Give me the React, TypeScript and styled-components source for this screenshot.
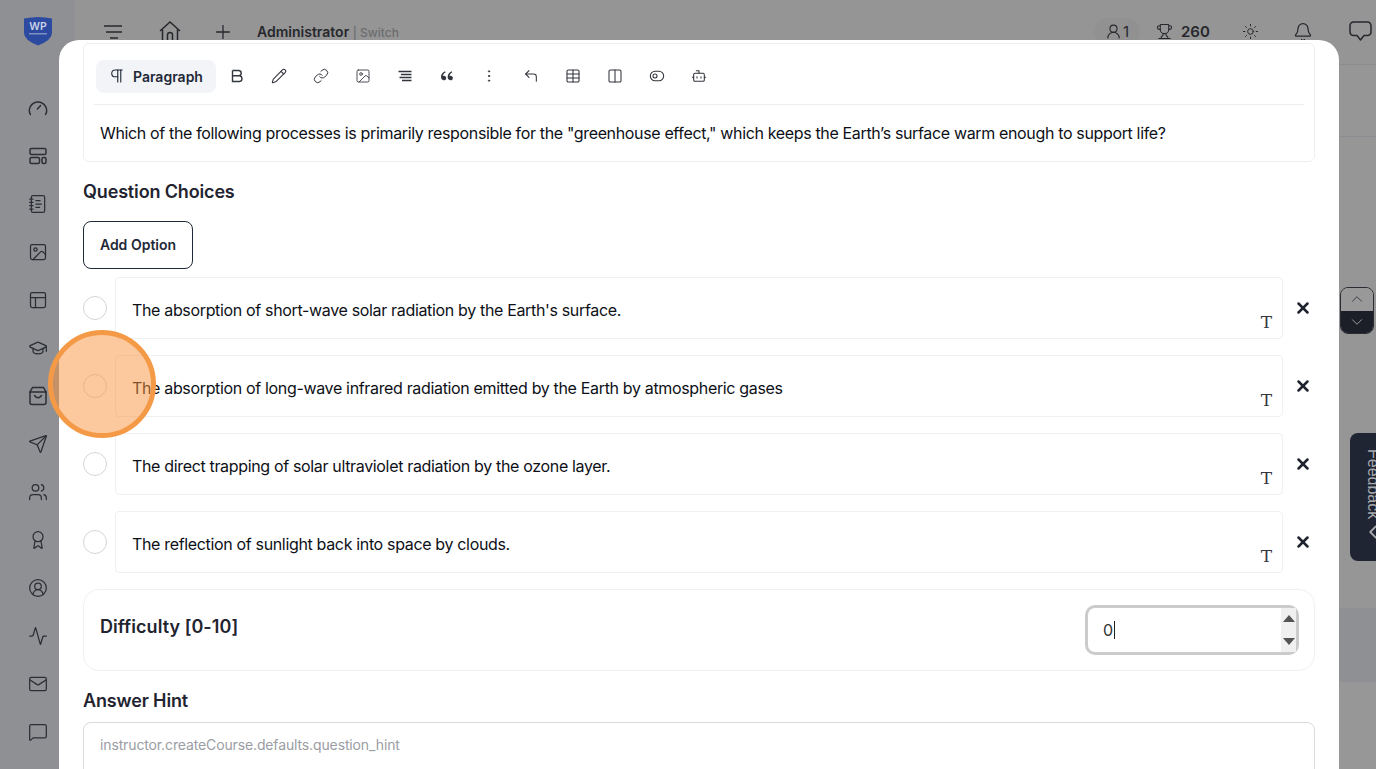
import React from "react";
import styled, { createGlobalStyle } from "styled-components";
import {
  Activity,
  Award,
  Bell,
  Bot,
  ChevronDown,
  ChevronLeft,
  ChevronUp,
  CircleUserRound,
  Columns2,
  CornerUpLeft,
  EllipsisVertical,
  GraduationCap,
  Image,
  Link,
  Mail,
  MessageSquare,
  NotebookText,
  PanelsTopLeft,
  Pencil,
  Pilcrow,
  Plus,
  Send,
  Sun,
  Table,
  ToggleLeft,
  Trophy,
  UserRound,
  Users,
  X,
} from "lucide-react";
import { RiDoubleQuotesL } from "react-icons/ri";

const GlobalStyle = createGlobalStyle`
  html, body {
    margin: 0;
    height: 100%;
    overflow: hidden;
    font-family: Inter, "Liberation Sans", sans-serif;
    color: #0d1017;
  }
  * { box-sizing: border-box; }
`;

const Page = styled.div`
  position: relative;
  display: flex;
  width: 1376px;
  height: 769px;
  overflow: hidden;
  background: #959595;
`;

const Sidebar = styled.aside`
  display: flex;
  flex-direction: column;
  align-items: center;
  flex: 0 0 75px;
  background: #8f9094;
  color: #2b2e35;
`;

const LogoBox = styled.div`
  display: flex;
  justify-content: center;
  height: 84px;
  padding-top: 16px;
`;

const NavItem = styled.div`
  display: flex;
  align-items: center;
  justify-content: center;
  height: 48px;
  width: 100%;
`;

const Main = styled.div`
  display: flex;
  flex-direction: column;
  flex: 1;
`;

const Header = styled.header`
  display: flex;
  align-items: center;
  height: 65px;
  padding-bottom: 1px;
  border-bottom: 1px solid #8b8b8b;
  color: #26282d;
`;

const HeaderIcon = styled.div<{ $width: number }>`
  display: flex;
  justify-content: center;
  width: ${(p) => p.$width}px;
`;

const Role = styled.div`
  font-size: 14px;
  font-weight: 600;
  white-space: nowrap;
`;

const Switcher = styled.span`
  font-size: 12px;
  font-weight: 500;
  color: #6b6c6f;
`;

const HeaderRight = styled.div`
  display: flex;
  align-items: center;
  margin-left: auto;
`;

const OnlinePill = styled.div`
  display: flex;
  align-items: center;
  gap: 1px;
  height: 28px;
  padding: 0 11px;
  border-radius: 14px;
  background: #919191;
  font-size: 15px;
`;

const Points = styled.div`
  display: flex;
  align-items: center;
  gap: 8px;
  width: 82px;
  margin-left: 16px;
  font-size: 15px;
  font-weight: 600;
`;

const Band = styled.div<{ $height: number; $bg: string }>`
  flex: 0 0 ${(p) => p.$height}px;
  background: ${(p) => p.$bg};
`;

const Overlay = styled.div`
  position: absolute;
  inset: 0;
  padding: 40px 37px 0 59px;
`;

const Modal = styled.div`
  height: 729px;
  overflow: hidden;
  padding: 3px 24px 0;
  border-radius: 20px 20px 0 0;
  background: #fff;
`;

const EditorCard = styled.section`
  border: 1px solid #eceef1;
  border-radius: 6px;
`;

const Toolbar = styled.div`
  display: flex;
  align-items: center;
  margin: 0 10px;
  padding: 16px 0 11px 2px;
  border-bottom: 1px solid #eceef1;
  color: #33363d;
`;

const ParagraphButton = styled.button`
  display: flex;
  align-items: center;
  gap: 7px;
  width: 120px;
  height: 33px;
  padding: 0 12px 1px;
  border: 0;
  border-radius: 8px;
  background: #f2f4f8;
  color: #1f2937;
  font: 600 14px Inter, sans-serif;
`;

const ToolButton = styled.div`
  display: flex;
  align-items: center;
  justify-content: center;
  width: 42px;
  height: 33px;
  padding-bottom: 1px;
`;

const EditorText = styled.p`
  margin: 0;
  padding: 16px;
  font-size: 16px;
  line-height: 24px;
  letter-spacing: -0.35px;
  white-space: nowrap;
`;

const SectionTitle = styled.h3`
  margin: 16px 0 0;
  font-size: 18px;
  font-weight: 600;
  line-height: 28px;
  letter-spacing: -0.15px;
  color: #1f2430;
`;

const AddButton = styled.button`
  display: block;
  width: 110px;
  height: 48px;
  margin: 15px 0 8px;
  padding-bottom: 2px;
  border: 1px solid #1f2937;
  border-radius: 8px;
  background: #fff;
  color: #1f2937;
  font: 600 14px Inter, sans-serif;
`;

const Choices = styled.div`
  display: flex;
  flex-direction: column;
  gap: 16px;
`;

const Choice = styled.div`
  display: flex;
  align-items: center;
  padding-right: 3px;
`;

const Radio = styled.span`
  flex: 0 0 24px;
  height: 24px;
  margin-right: 8px;
  border: 1px solid #d5d6d8;
  border-radius: 50%;
  background: #fff;
`;

const ChoiceBox = styled.div`
  position: relative;
  flex: 1;
  height: 62px;
  margin-right: 11px;
  padding: 20px 16px 0;
  border: 1px solid #eef0f2;
  border-radius: 4px;
  font-size: 16px;
  line-height: 24px;
  letter-spacing: -0.34px;
`;

const TypeMark = styled.span`
  position: absolute;
  right: 10px;
  top: 33px;
  font: 400 17px/22px "DejaVu Serif", serif;
  letter-spacing: 0;
  color: #33363d;
`;

const RemoveIcon = styled(X)`
  flex: 0 0 18px;
  color: #1f2430;
`;

const DifficultyCard = styled.section`
  display: flex;
  align-items: center;
  justify-content: space-between;
  height: 82px;
  margin-top: 16px;
  padding: 0 15px 8px 16px;
  border: 1px solid #eef0f2;
  border-radius: 16px;
`;

const DifficultyLabel = styled.div`
  font-size: 18px;
  font-weight: 600;
  letter-spacing: 0.05px;
  color: #1f2430;
`;

const NumberField = styled.div`
  display: flex;
  align-items: center;
  justify-content: space-between;
  width: 214px;
  height: 50px;
  margin-top: 8px;
  padding-left: 15px;
  border: 3px solid #cbcbcb;
  border-radius: 10px;
  font-size: 16px;
  color: #333;
`;

const Caret = styled.span`
  display: inline-block;
  width: 1px;
  height: 18px;
  margin-left: 1px;
  vertical-align: -3px;
  background: #222;
`;

const Spinner = styled.div`
  display: flex;
  flex-direction: column;
  justify-content: space-between;
  align-items: center;
  width: 15px;
  height: 100%;
  padding: 7px 0;
  background: #f0f0f0;
`;

const SpinArrow = styled.span<{ $up?: boolean }>`
  width: 0;
  height: 0;
  border-left: 6.5px solid transparent;
  border-right: 6.5px solid transparent;
  ${(p) => (p.$up ? "border-bottom: 7px solid #555;" : "border-top: 7px solid #555;")}
`;

const HintInput = styled.div`
  height: 80px;
  margin-top: 7px;
  padding: 12px 16px;
  border: 1px solid #d9dadd;
  border-radius: 8px;
  font-size: 14px;
  line-height: 20px;
  letter-spacing: -0.13px;
  color: #9a9da3;
`;

const ClickMarker = styled.div`
  position: absolute;
  left: 48px;
  top: 330px;
  width: 108px;
  height: 108px;
  border: 5px solid #f49a47;
  border-radius: 50%;
  background: rgba(250, 146, 60, 0.5);
`;

const ScrollButtons = styled.div`
  position: absolute;
  left: 1340px;
  top: 287px;
  display: flex;
  flex-direction: column;
  width: 34px;
  height: 47px;
  overflow: hidden;
  border: 1px solid #2a2d33;
  border-radius: 8px;
`;

const ScrollHalf = styled.div<{ $dark?: boolean }>`
  display: flex;
  flex: 1;
  align-items: center;
  justify-content: center;
  background: ${(p) => (p.$dark ? "#1c1f27" : "#999999")};
  color: ${(p) => (p.$dark ? "#a9abb0" : "#33363d")};
`;

const FeedbackTab = styled.div`
  position: absolute;
  left: 1350px;
  top: 433px;
  display: flex;
  flex-direction: column;
  align-items: center;
  width: 46px;
  height: 128px;
  padding-top: 16px;
  border-radius: 8px 0 0 8px;
  background: #1f2532;
  color: #a7a9ad;
  font: 400 16px "Liberation Sans", sans-serif;
`;

const FeedbackLabel = styled.span`
  writing-mode: vertical-rl;
  line-height: 18px;
`;

const FeedbackChevron = styled(ChevronLeft)`
  margin-top: 2px;
`;

const ShieldLogo = () => (
  <svg width="30" height="30" viewBox="0 0 30 30">
    <path d="M1 2.5 Q15 -0.5 29 2.5 V17 Q29 24 15 29.5 Q1 24 1 17 Z" fill="#2b4aa0" />
    <text x="15" y="14" textAnchor="middle" fontSize="10.5" fontWeight="600" fill="#c9d1e6" fontFamily="Inter, sans-serif">
      WP
    </text>
    <rect x="6" y="17" width="18" height="1.5" fill="#7f90c4" />
  </svg>
);

const GaugeIcon = () => (
  <svg width="20" height="20" viewBox="0 0 20 20" fill="none" stroke="currentColor" strokeWidth="1.5" strokeLinecap="round">
    <path d="M2.4 16.5 A8.6 8.6 0 1 1 17.6 16.5" />
    <path d="M9.4 11 L12.6 7.6" />
  </svg>
);

const BlocksIcon = () => (
  <svg width="20" height="20" viewBox="0 0 20 20" fill="none" stroke="currentColor" strokeWidth="1.5">
    <rect x="2" y="2.5" width="16" height="6" rx="1.5" />
    <rect x="2" y="11.5" width="9.5" height="6" rx="1.5" />
    <rect x="14" y="11.5" width="4" height="6" rx="1.5" />
  </svg>
);

const BagIcon = () => (
  <svg width="20" height="20" viewBox="0 0 20 20" fill="none" stroke="currentColor" strokeWidth="1.5" strokeLinecap="round">
    <path d="M4.5 1.5 H15.5 L18 6 V16.5 A2 2 0 0 1 16 18.5 H4 A2 2 0 0 1 2 16.5 V6 Z" />
    <path d="M2 6 H18" />
    <path d="M6.5 9.5 Q10 14 13.5 9.5" />
  </svg>
);

const MenuIcon = () => (
  <svg width="20" height="16" viewBox="0 0 20 16" fill="none" stroke="currentColor" strokeWidth="1.6">
    <path d="M1 2 H19 M3 8 H19 M7 14 H15" />
  </svg>
);

const HouseIcon = () => (
  <svg width="22" height="24" viewBox="0 0 22 24" fill="none" stroke="currentColor" strokeWidth="1.5">
    <path d="M1 11 L11 2 L21 11 M3.5 9.5 V22 H18.5 V9.5" />
    <path d="M8.5 22 V15 A2.5 2.5 0 0 1 13.5 15 V22" />
  </svg>
);

const ChatIcon = () => (
  <svg width="23" height="21" viewBox="0 0 23 21" fill="none" stroke="currentColor" strokeWidth="1.5" strokeLinejoin="round">
    <path d="M4.5 1 H18.5 A3.5 3.5 0 0 1 22 4.5 V11 A3.5 3.5 0 0 1 18.5 14.5 H15 L11.5 19 L8 14.5 H4.5 A3.5 3.5 0 0 1 1 11 V4.5 A3.5 3.5 0 0 1 4.5 1 Z" />
  </svg>
);

const BoldIcon = () => (
  <svg width="16" height="16" viewBox="0 0 16 16" fill="none" stroke="currentColor" strokeWidth="1.4">
    <path d="M3.5 2.5 H10 A2.7 2.7 0 0 1 10 7.8 H3.5 M3.5 7.8 H10.6 A2.9 2.9 0 0 1 10.6 13.5 H3.5 Z M3.5 2.5 V13.5" />
  </svg>
);

const AlignIcon = () => (
  <svg width="16" height="16" viewBox="0 0 16 16" fill="none" stroke="currentColor" strokeWidth="1.3">
    <path d="M1.5 3.5 H14.5 M4 6.5 H14.5 M2.5 9.5 H14.5 M5 12.5 H14.5" />
  </svg>
);

const navIcons = [
  <GaugeIcon />,
  <BlocksIcon />,
  <NotebookText size={20} strokeWidth={1.5} />,
  <Image size={20} strokeWidth={1.5} />,
  <PanelsTopLeft size={20} strokeWidth={1.5} />,
  <GraduationCap size={20} strokeWidth={1.5} />,
  <BagIcon />,
  <Send size={20} strokeWidth={1.5} />,
  <Users size={20} strokeWidth={1.5} />,
  <Award size={20} strokeWidth={1.5} />,
  <CircleUserRound size={20} strokeWidth={1.5} />,
  <Activity size={20} strokeWidth={1.5} />,
  <Mail size={20} strokeWidth={1.5} />,
  <MessageSquare size={20} strokeWidth={1.5} />,
];

const toolIcons = [
  <BoldIcon />,
  <Pencil size={16} strokeWidth={1.6} />,
  <Link size={16} strokeWidth={1.5} />,
  <Image size={16} strokeWidth={1.3} />,
  <AlignIcon />,
  <RiDoubleQuotesL size={16} />,
  <EllipsisVertical size={16} strokeWidth={1.5} />,
  <CornerUpLeft size={16} strokeWidth={1.6} />,
  <Table size={16} strokeWidth={1.6} />,
  <Columns2 size={16} strokeWidth={1.6} />,
  <ToggleLeft size={16} strokeWidth={1.6} />,
  <Bot size={16} strokeWidth={1.6} />,
];

const choices = [
  "The absorption of short-wave solar radiation by the Earth's surface.",
  "The absorption of long-wave infrared radiation emitted by the Earth by atmospheric gases",
  "The direct trapping of solar ultraviolet radiation by the ozone layer.",
  "The reflection of sunlight back into space by clouds.",
];

export default function App() {
  return (
    <Page>
      <GlobalStyle />
      <Sidebar>
        <LogoBox>
          <ShieldLogo />
        </LogoBox>
        {navIcons.map((icon, i) => (
          <NavItem key={i}>{icon}</NavItem>
        ))}
      </Sidebar>
      <Main>
        <Header>
          <HeaderIcon $width={76}>
            <MenuIcon />
          </HeaderIcon>
          <HeaderIcon $width={38}>
            <HouseIcon />
          </HeaderIcon>
          <HeaderIcon $width={68}>
            <Plus size={22} strokeWidth={1.4} />
          </HeaderIcon>
          <Role>
            Administrator <Switcher>| Switch</Switcher>
          </Role>
          <HeaderRight>
            <OnlinePill>
              <UserRound size={17} strokeWidth={1.5} />1
            </OnlinePill>
            <Points>
              <Trophy size={17} strokeWidth={1.5} />
              260
            </Points>
            <HeaderIcon $width={24}>
              <Sun size={17} strokeWidth={1.4} />
            </HeaderIcon>
            <HeaderIcon $width={82}>
              <Bell size={20} strokeWidth={1.5} />
            </HeaderIcon>
            <HeaderIcon $width={32}>
              <ChatIcon />
            </HeaderIcon>
          </HeaderRight>
        </Header>
        <Band $height={71} $bg="#969696" />
        <Band $height={1} $bg="#8c8c92" />
        <Band $height={471} $bg="#969696" />
        <Band $height={74} $bg="#8f9093" />
        <Band $height={87} $bg="#979797" />
      </Main>

      <Overlay>
        <Modal>
          <EditorCard>
            <Toolbar>
              <ParagraphButton>
                <Pilcrow size={18} strokeWidth={1.5} />
                Paragraph
              </ParagraphButton>
              {toolIcons.map((icon, i) => (
                <ToolButton key={i}>{icon}</ToolButton>
              ))}
            </Toolbar>
            <EditorText>
              Which of the following processes is primarily responsible for the "greenhouse effect," which keeps the
              Earth’s surface warm enough to support life?
            </EditorText>
          </EditorCard>

          <SectionTitle>Question Choices</SectionTitle>
          <AddButton>Add Option</AddButton>

          <Choices>
            {choices.map((text) => (
              <Choice key={text}>
                <Radio />
                <ChoiceBox>
                  {text}
                  <TypeMark>T</TypeMark>
                </ChoiceBox>
                <RemoveIcon size={18} strokeWidth={3.4} />
              </Choice>
            ))}
          </Choices>

          <DifficultyCard>
            <DifficultyLabel>Difficulty [0-10]</DifficultyLabel>
            <NumberField>
              <span>
                0<Caret />
              </span>
              <Spinner>
                <SpinArrow $up />
                <SpinArrow />
              </Spinner>
            </NumberField>
          </DifficultyCard>

          <SectionTitle>Answer Hint</SectionTitle>
          <HintInput>instructor.createCourse.defaults.question_hint</HintInput>
        </Modal>
      </Overlay>

      <ClickMarker />

      <ScrollButtons>
        <ScrollHalf>
          <ChevronUp size={18} strokeWidth={1.2} />
        </ScrollHalf>
        <ScrollHalf $dark>
          <ChevronDown size={18} strokeWidth={1.2} />
        </ScrollHalf>
      </ScrollButtons>

      <FeedbackTab>
        <FeedbackLabel>Feedback</FeedbackLabel>
        <FeedbackChevron size={22} strokeWidth={2} />
      </FeedbackTab>
    </Page>
  );
}
